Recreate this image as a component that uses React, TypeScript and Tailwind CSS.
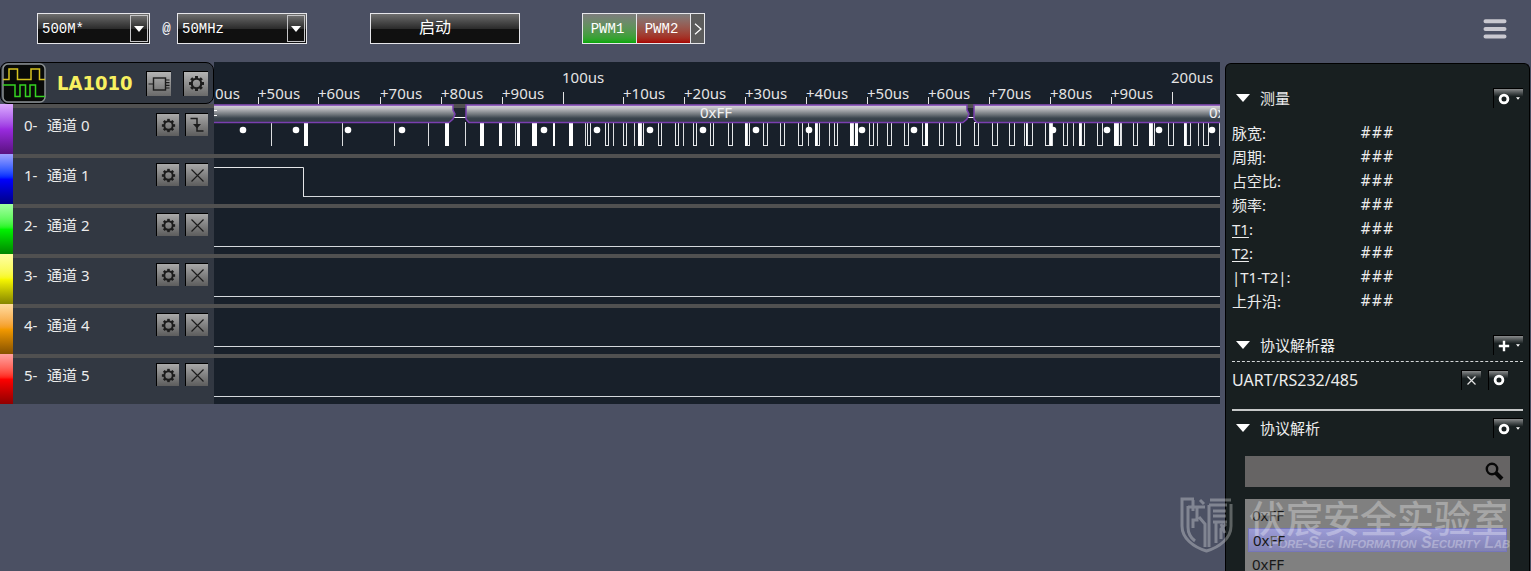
import { ReactNode } from "react";

const ui = "font-['Noto_Sans','Noto_Sans_CJK_SC',sans-serif]";

/* ---------- icons ---------- */

function Gear({ size = 15 }: { size?: number }) {
  const teeth = [0, 45, 90, 135, 180, 225, 270, 315];
  return (
    <svg width={size} height={size} viewBox="0 0 14 14" fill="none" stroke="#1c1c1c">
      <circle cx="7" cy="7" r="3.9" strokeWidth="1.8" />
      {teeth.map((a) => (
        <path key={a} d="M7 0.8V3" strokeWidth="2.4" transform={`rotate(${a} 7 7)`} />
      ))}
    </svg>
  );
}

function Chip() {
  return (
    <svg width="22" height="16" viewBox="0 0 22 16" fill="none" stroke="#1c1c1c">
      <rect x="5.5" y="2" width="12" height="12" strokeWidth="1.4" />
      <path d="M0.5 8H5.5M17.5 4H21.5M17.5 6.7H21.5M17.5 9.3H21.5M17.5 12H21.5" strokeWidth="1.2" />
    </svg>
  );
}

function Edge() {
  return (
    <svg width="16" height="18" viewBox="0 0 16 18" fill="none" stroke="#1c1c1c" strokeWidth="1.5">
      <path d="M1.5 2.5H8V15H14.5" />
      <path d="M4 8H12L8 12.5Z" fill="#1c1c1c" stroke="none" />
    </svg>
  );
}

function Cross() {
  return (
    <svg width="15" height="15" viewBox="0 0 15 15" fill="none" stroke="#1c1c1c" strokeWidth="1.2">
      <path d="M1.5 1.5L13.5 13.5M13.5 1.5L1.5 13.5" />
    </svg>
  );
}

function DeviceLogo() {
  return (
    <svg width="44" height="40" viewBox="0 0 44 40" fill="none">
      <rect x="1" y="1" width="42" height="38" rx="5" fill="#080a08" stroke="#8b9092" strokeWidth="1.5" />
      <path d="M1 16.5H7V6H15.5V16.5H29V6H37.5V16.5H43" stroke="#d6c320" strokeWidth="1.5" />
      <path d="M1 22H13V33.5H18V22H23.5V33.5H28V22H33.5V33.5H43" stroke="#35d321" strokeWidth="1.5" />
    </svg>
  );
}

function Ring() {
  return (
    <svg width="12" height="12" viewBox="0 0 12 12" fill="none">
      <circle cx="6" cy="6" r="3.9" stroke="#fff" strokeWidth="2.8" />
    </svg>
  );
}

function Plus() {
  return (
    <svg width="12" height="12" viewBox="0 0 12 12" stroke="#fff" strokeWidth="2.4">
      <path d="M6 0.8V11.2M0.8 6H11.2" />
    </svg>
  );
}

/* ---------- shared controls ---------- */

function ToolButton({ label, children }: { label: string; children: ReactNode }) {
  return (
    <button
      aria-label={label}
      className="flex h-[23px] w-[23px] shrink-0 items-center justify-center border-t border-l border-black bg-gradient-to-b from-[#a9a9a9] to-[#5d5d5d]"
    >
      {children}
    </button>
  );
}

function PanelButton({ label, menu = false, children }: { label: string; menu?: boolean; children: ReactNode }) {
  return (
    <button
      aria-label={label}
      className={`flex h-5 shrink-0 items-center justify-center gap-1.5 border-t border-l border-black bg-gradient-to-b from-[#8a8c8d] from-0% to-[#181f20] to-40% ${menu ? "w-[30px]" : "w-5"}`}
    >
      {children}
      {menu && (
        <svg width="4" height="3" viewBox="0 0 5 3">
          <path d="M0 0H5L2.5 3Z" fill="#fff" />
        </svg>
      )}
    </button>
  );
}

function Combo({ label, value, width }: { label: string; value: string; width: string }) {
  return (
    <div className={`relative h-[31px] ${width}`}>
      <select
        aria-label={label}
        defaultValue={value}
        className="h-full w-full appearance-none border border-[#e6e6ea] bg-gradient-to-b from-[#6e6e6e] via-[#2c2c2c] via-50% to-[#101010] to-52% pr-6 pl-1 font-['Liberation_Mono',monospace] text-sm text-white outline-none"
      >
        <option>{value}</option>
      </select>
      <span className="pointer-events-none absolute top-0.5 right-0.5 bottom-0.5 flex w-[18px] items-center justify-center border border-[#c4c4c6] bg-gradient-to-b from-[#6e6e6e] via-[#2c2c2c] via-50% to-[#101010] to-52%">
        <svg width="10" height="6" viewBox="0 0 10 6">
          <path d="M0 0H10L5 6Z" fill="#fff" />
        </svg>
      </span>
    </div>
  );
}

/* ---------- toolbar ---------- */

function Toolbar() {
  return (
    <header className="flex h-[62px] shrink-0 items-center pr-6 pb-[5px] pl-[37px] font-['Liberation_Mono','Noto_Sans_CJK_SC',monospace] text-sm text-white">
      <Combo label="采样深度" value="500M*" width="w-[113px]" />
      <span className="w-[27px] pl-1.5 text-center">@</span>
      <Combo label="采样率" value="50MHz" width="w-[130px]" />
      <button className="ml-[63px] h-[31px] w-[150px] border border-[#e6e6ea] bg-gradient-to-b from-[#6e6e6e] via-[#2c2c2c] via-50% to-[#101010] to-52% pr-5 text-base leading-none">
        启动
      </button>
      <div className="ml-[62px] flex h-[31px] divide-x divide-[#e6e6ea] border border-[#e6e6ea]">
        <button className="w-[54px] bg-gradient-to-b from-[#7d7d7d] to-[#00a803] pr-1">PWM1</button>
        <button className="w-[54px] bg-gradient-to-b from-[#7d7d7d] to-[#a80000] pr-1">PWM2</button>
        <button aria-label="更多" className="flex w-[13px] items-center justify-center bg-[#5c5c5c]">
          <svg width="8" height="12" viewBox="0 0 8 12" fill="none" stroke="#fff" strokeWidth="1.2">
            <path d="M1 0.8L7 6L1 11.2" />
          </svg>
        </button>
      </div>
      <button aria-label="菜单" className="ml-auto">
        <svg width="24" height="20" viewBox="0 0 24 20" stroke="#c9c8d0" strokeWidth="4" strokeLinecap="round">
          <path d="M2.5 2.2H21.5M2.5 10H21.5M2.5 17.5H21.5" />
        </svg>
      </button>
    </header>
  );
}

/* ---------- timeline ---------- */

const minorTicks = [
  { x: 44, t: "+50us" },
  { x: 104, t: "+60us" },
  { x: 166, t: "+70us" },
  { x: 227, t: "+80us" },
  { x: 288, t: "+90us" },
  { x: 409, t: "+10us" },
  { x: 470, t: "+20us" },
  { x: 531, t: "+30us" },
  { x: 592, t: "+40us" },
  { x: 653, t: "+50us" },
  { x: 714, t: "+60us" },
  { x: 775, t: "+70us" },
  { x: 836, t: "+80us" },
  { x: 897, t: "+90us" },
];

const majorTicks = [
  { x: 349, t: "100us" },
  { x: 958, t: "200us" },
];

function Ruler() {
  return (
    <svg className={`h-[42px] min-w-0 flex-1 bg-[#18202a] text-[15px] ${ui}`} fill="#e4e4e4">
      <text x="1" y="37">0us</text>
      {minorTicks.map(({ x, t }) => (
        <g key={x}>
          <rect x={x} y="35" width="1" height="7" />
          <text x={x} y="37">{t}</text>
        </g>
      ))}
      {majorTicks.map(({ x, t }) => (
        <g key={x}>
          <rect x={x} y="30" width="1" height="12" />
          <text x={x - 1} y="21">{t}</text>
        </g>
      ))}
    </svg>
  );
}

/* Pulses of channel 0: [x, width, kind], l = line, b = filled bar, o = open box */
type Pulse = [number, number, "l" | "b" | "o"];
const pulses: Pulse[] = [
  [57, 1, "l"], [90, 4, "b"], [128, 1, "l"], [180, 1, "l"], [214, 1, "l"], [231, 4, "b"], [251, 1, "l"],
  [266, 4, "b"], [285, 3, "b"], [301, 1, "l"], [303, 3, "b"], [318, 5, "b"], [339, 2, "b"], [355, 4, "b"],
  [371, 1, "l"], [373, 4, "o"], [391, 4, "o"], [399, 1, "l"], [409, 4, "o"], [420, 1, "l"], [424, 3, "b"],
  [427, 2, "o"], [444, 4, "o"], [461, 4, "o"], [469, 1, "l"], [479, 4, "o"], [496, 4, "o"], [514, 5, "o"],
  [531, 3, "b"], [533, 3, "o"], [549, 5, "o"], [566, 5, "o"], [584, 5, "o"], [594, 1, "l"], [601, 3, "b"],
  [603, 3, "o"], [615, 1, "l"], [620, 4, "o"], [636, 3, "b"], [639, 2, "o"], [641, 3, "b"], [655, 5, "o"],
  [663, 1, "l"], [673, 5, "o"], [690, 5, "o"], [708, 4, "o"], [711, 3, "b"], [725, 5, "o"], [742, 5, "o"],
  [760, 5, "o"], [778, 6, "o"], [795, 6, "o"], [810, 1, "l"], [812, 2, "b"], [813, 6, "o"], [831, 5, "o"],
  [836, 2, "b"], [838, 1, "l"], [849, 5, "o"], [859, 1, "l"], [865, 3, "b"], [867, 4, "o"], [883, 6, "o"],
  [900, 4, "b"], [904, 2, "o"], [907, 1, "l"], [919, 5, "o"], [935, 4, "b"], [938, 3, "o"], [954, 6, "o"],
  [970, 3, "b"], [972, 5, "o"], [984, 1, "l"], [989, 6, "o"], [1005, 1, "l"],
];

const bitDots = [29, 82, 134, 188, 330, 383, 436, 489, 542, 595, 648, 700, 839, 893, 945, 998];

function Decode() {
  return (
    <>
      <defs>
        <linearGradient id="frame" x1="0" y1="0" x2="0" y2="1">
          <stop offset="0" stopColor="#dcd6e2" />
          <stop offset="0.2" stopColor="#bdbdc1" />
          <stop offset="0.55" stopColor="#6d7379" />
          <stop offset="0.75" stopColor="#3a444d" />
          <stop offset="1" stopColor="#323b46" />
        </linearGradient>
      </defs>
      <rect y="4" x="240" width="12" height="10" fill="#202630" />
      <rect y="4" x="754" width="6" height="10" fill="#202630" />
      <path d="M240 13.5H252M754 13.5H760" stroke="#fff" />
      <g fill="url(#frame)" stroke="#7a3fb0" strokeWidth="1.5">
        <path d="M-5 1H239V6L241 10L239 15L235 18.5H-5Z" />
        <path d="M252 1H753V6L755 10L753 15L749 18.5H255L252 15Z" />
        <path d="M760 1H2400V18.5H763L760 15Z" />
      </g>
      <path d="M0 6.5H3M0 11.5H3" stroke="#fff" />
      <text x="486" y="14" fill="#f2f2f2">0xFF</text>
      <text x="995" y="14" fill="#f2f2f2">0xFF</text>
    </>
  );
}

function SerialWave() {
  return (
    <svg className={`h-[50px] min-w-0 flex-1 bg-[#18202a] text-[15px] ${ui}`}>
      <rect width="100%" height="4" fill="#505050" />
      {pulses.map(([x, w, kind]) =>
        kind === "o" ? (
          <rect key={x} x={x + 0.5} y="18.5" width={Math.max(w - 1, 2)} height="23" fill="none" stroke="#e6e8ea" />
        ) : (
          <rect key={x} x={x} y="18" width={w} height="24" fill={kind === "b" ? "#fff" : "#dcdee0"} />
        ),
      )}
      {bitDots.map((x) => (
        <circle key={x} cx={x} cy="26" r="3.3" fill="#fff" />
      ))}
      <Decode />
    </svg>
  );
}

function LevelWave({ dropAt }: { dropAt?: number }) {
  return (
    <svg className="h-[50px] min-w-0 flex-1 bg-[#18202a]">
      <rect width="100%" height="4" fill="#505050" />
      <line x1={dropAt ?? 0} x2="100%" y1="42" y2="42" stroke="#d4d8dc" shapeRendering="crispEdges" />
      {dropAt && (
        <path d={`M0 13.5H${dropAt + 0.5}V42`} fill="none" stroke="#e4e6e8" />
      )}
    </svg>
  );
}

const channels = [
  "from-[#dcaaff] via-[#9a2be0] to-[#5a1280]",
  "from-[#a0a0ff] via-[#0000ff] to-[#000086]",
  "from-[#a0ffa0] via-[#00f400] to-[#008600]",
  "from-[#ffffa0] via-[#f8f800] to-[#868600]",
  "from-[#ffdc9e] via-[#f49a00] to-[#865200]",
  "from-[#ffa0a0] via-[#ff0000] to-[#900000]",
];

function Analyzer() {
  return (
    <section className="min-w-0 flex-1">
      <div className="flex">
        <div className="flex h-[42px] w-[214px] shrink-0 items-center rounded-lg border border-black bg-[#323842] pl-px">
          <DeviceLogo />
          <h1 className="ml-[11px] w-[89px] font-['DejaVu_Sans_Condensed',sans-serif] text-xl font-bold text-[#f8f060]">
            LA1010
          </h1>
          <button
            aria-label="设备"
            className="flex h-[25px] w-[25px] items-center justify-center border-t border-l border-black bg-gradient-to-b from-[#b4b4b4] to-[#6a6a6a]"
          >
            <Chip />
          </button>
          <button
            aria-label="设备设置"
            className="ml-3 flex h-[25px] w-[25px] items-center justify-center border-t border-l border-black bg-gradient-to-b from-[#b4b4b4] to-[#6a6a6a]"
          >
            <Gear size={17} />
          </button>
        </div>
        <Ruler />
      </div>
      {channels.map((strip, i) => (
        <div key={i} className="flex">
          <div className={`w-[13px] shrink-0 bg-gradient-to-b ${strip}`} />
          <div className={`flex h-[50px] w-[201px] shrink-0 items-start border-t-4 border-[#505050] bg-[#323842] pt-[5px] pr-1.5 pl-[11px] text-[#ececec] ${ui}`}>
            <span className="w-[23px] text-[15px] leading-6">{i}-</span>
            <span className="flex-1 text-[15px] leading-6">通道 {i}</span>
            <div className="flex gap-1.5">
              <ToolButton label={`通道 ${i} 设置`}>
                <Gear />
              </ToolButton>
              <ToolButton label={`通道 ${i} 触发`}>{i === 0 ? <Edge /> : <Cross />}</ToolButton>
            </div>
          </div>
          {i === 0 ? <SerialWave /> : <LevelWave dropAt={i === 1 ? 89 : undefined} />}
        </div>
      ))}
    </section>
  );
}

/* ---------- side panel ---------- */

function PanelHeader({ title, icon, action }: { title: string; icon: ReactNode; action: string }) {
  return (
    <div className="flex h-6 items-center">
      <svg width="14" height="8" viewBox="0 0 14 8" className="ml-1">
        <path d="M0 0H14L7 8Z" fill="#fff" />
      </svg>
      <h2 className="ml-2.5 flex-1 text-[15px]">{title}</h2>
      <PanelButton label={action} menu>
        {icon}
      </PanelButton>
    </div>
  );
}

const measures: ReactNode[] = [
  "脉宽:",
  "周期:",
  "占空比:",
  "频率:",
  <><u className="underline-offset-2">T1</u>:</>,
  <><u className="underline-offset-2">T2</u>:</>,
  "|T1-T2|:",
  "上升沿:",
];

function SidePanel() {
  return (
    <aside className={`mt-px mr-px ml-[5px] w-[305px] shrink-0 overflow-hidden rounded-t-md border border-b-0 border-black bg-[#181f20] px-1.5 pt-[22px] text-[15px] text-[#ececec] ${ui}`}>
      <PanelHeader title="测量" icon={<Ring />} action="测量设置" />
      <dl className="mt-[11px]">
        {measures.map((m, i) => (
          <div key={i} className="flex h-6 items-center">
            <dt className="w-32">{m}</dt>
            <dd className="font-['DejaVu_Sans_Condensed',sans-serif]">###</dd>
          </div>
        ))}
      </dl>
      <div className="mt-5">
        <PanelHeader title="协议解析器" icon={<Plus />} action="添加解析器" />
      </div>
      <div className="mt-1 flex h-9 items-center border-t border-dashed border-[#d4d8d8] pr-[15px]">
        <span className="flex-1 text-base">UART/RS232/485</span>
        <PanelButton label="删除">
          <svg width="9" height="9" viewBox="0 0 9 9" stroke="#e4e4e4" strokeWidth="1.2">
            <path d="M0.5 0.5L8.5 8.5M8.5 0.5L0.5 8.5" />
          </svg>
        </PanelButton>
        <div className="ml-[7px]">
          <PanelButton label="解析器设置">
            <Ring />
          </PanelButton>
        </div>
      </div>
      <div className="mt-3 border-t-2 border-[#c6c8c8] pt-[5px]">
        <PanelHeader title="协议解析" icon={<Ring />} action="解析设置" />
      </div>
      <div className="relative mt-4 mr-[13px] ml-[13px]">
        <input aria-label="搜索" className="block h-[31px] w-full bg-[#666464] pr-8 pl-2 outline-none" />
        <svg className="absolute top-1.5 right-1.5" width="19" height="19" viewBox="0 0 19 19" fill="none" stroke="#080808">
          <circle cx="7" cy="7" r="5.2" strokeWidth="2.4" />
          <path d="M11 11L17 17" strokeWidth="4" />
        </svg>
      </div>
      <ul className="mt-3 mr-[13px] ml-[13px] h-32 bg-[#808080] px-[3px] pt-1 text-[15px] text-[#181818]">
        <li className="h-[25px] pl-1 leading-6">0xFF</li>
        <li className="h-6 border border-[#7676ba] bg-gradient-to-b from-[#9b9bd6] to-[#8282b4] pl-1 leading-[22px]">0xFF</li>
        <li className="h-[25px] pl-1 leading-6">0xFF</li>
      </ul>
    </aside>
  );
}

function Watermark() {
  return (
    <div className="pointer-events-none absolute right-[21px] bottom-[18px] flex items-center gap-4 text-white opacity-30">
      <svg width="53" height="56" viewBox="0 0 53 56" fill="none" stroke="#fff" strokeWidth="3">
        <path d="M14 2H2V29C2 41 13 50 26.5 54C40 50 51 41 51 29V7M30 3H51" />
        <path d="M8 9V30C8 36 11 41 15 44M13 3V14M8 10H25M17 10V23H13V31M19 20L25 27V50M20 3L24 7" />
        <path d="M29 8H47M29 8V50M33 14H46M33 19H46M33 25H47M36 25V46M41 27L45 36M46 27L41 32V42" />
      </svg>
      <div className="w-[261px]">
        <p className="font-['Noto_Sans_CJK_SC',sans-serif] text-[37px] leading-[36px] font-medium whitespace-nowrap">
          伏宸安全实验室
        </p>
        <p className="text-right font-['Liberation_Sans',sans-serif] text-[16px] leading-4 font-bold whitespace-nowrap italic [font-variant-caps:small-caps]">
          Fore-Sec Information Security Lab
        </p>
      </div>
    </div>
  );
}

export default function App() {
  return (
    <main className="relative flex h-screen flex-col overflow-hidden bg-[#4b5063]">
      <Toolbar />
      <div className="flex min-h-0 flex-1">
        <Analyzer />
        <SidePanel />
      </div>
      <Watermark />
    </main>
  );
}
